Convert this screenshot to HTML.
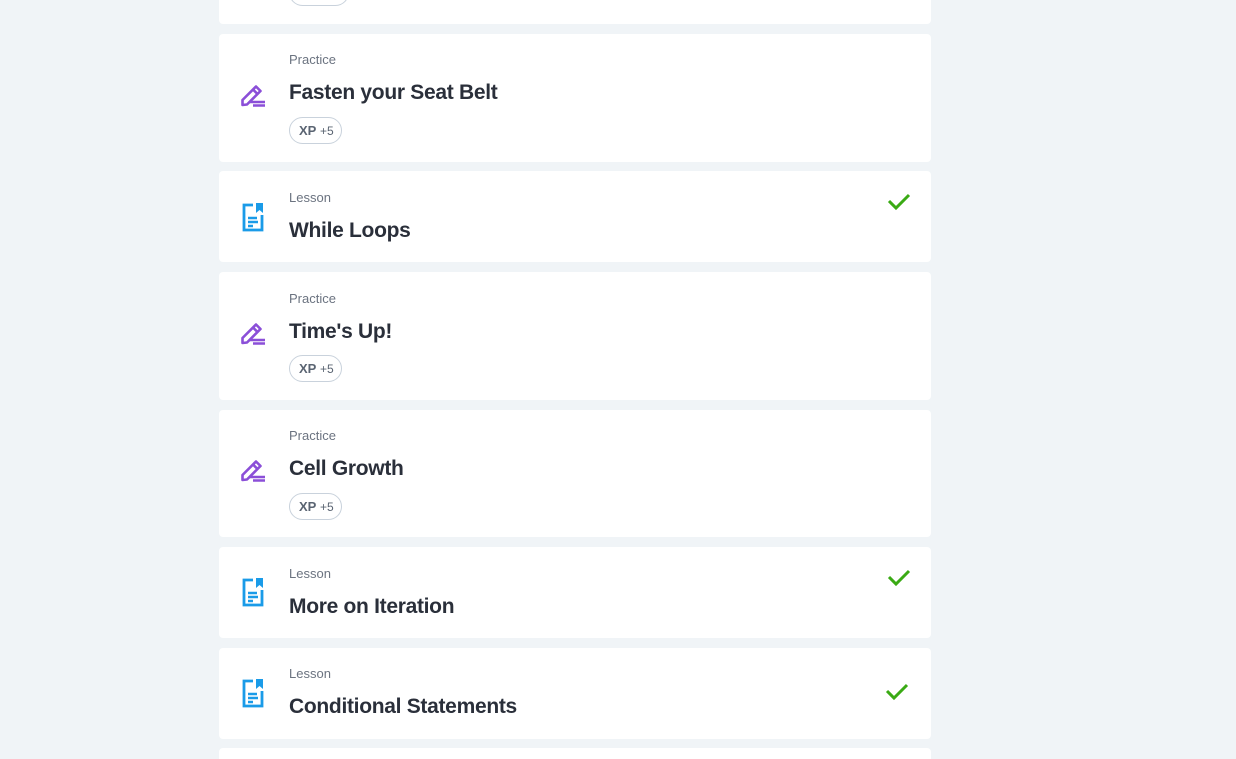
<!DOCTYPE html>
<html style="overflow:hidden;height:759px"><head><meta charset="utf-8"><style>
body{margin:0;width:1236px;height:759px;background:#f0f4f7;position:relative;overflow:hidden;font-family:"Liberation Sans",sans-serif}
.c{position:absolute;left:219px;width:712px;background:#fff;border-radius:4px}
.l{position:absolute;left:70px;font-size:13px;color:#6b7380}
.t{position:absolute;left:70px;font-size:21px;font-weight:bold;color:#2a2f3a;letter-spacing:-0.3px}
.b{position:absolute;left:70px;width:53px;height:27px;border:1px solid #c9d2dc;border-radius:14px;box-sizing:border-box;font-size:13px;color:#5a6472;line-height:25px;text-indent:9px}
.b b{color:#5a6472}
.i{position:absolute;left:21px}
.k{position:absolute;left:668px}
</style></head><body>
<svg width="0" height="0" style="position:absolute"><defs>
<g id="pen"><path d="M2.5 21 L2.5 16 L16 2.5 L20.5 7 L7 20.5 Z M13 5.5 L17.5 10" fill="none" stroke="#8b4fd8" stroke-width="2.6" stroke-linejoin="round"/><path d="M10 18 H25 M13 21.5 H25" stroke="#8b4fd8" stroke-width="2.4"/></g>
<g id="doc"><path d="M11 2 H2 V27 H20 V12" fill="none" stroke="#1a9be8" stroke-width="2.8"/><path d="M14 0 H21 V10 L17.5 7 L14 10 Z" fill="#1a9be8"/><path d="M6 15 H15 M6 19 H16 M6 23 H11" stroke="#1a9be8" stroke-width="2.4"/></g>
<g id="chk"><path d="M2 11 L9 18 L22 5" fill="none" stroke="#3aaa14" stroke-width="3"/></g>
</defs></svg>

<div class="c" style="top:-20px;height:44px"><div class="b" style="top:-1px;width:60px"></div></div>

<div class="c" style="top:34px;height:128px">
<svg class="i" style="top:50px" width="26" height="24"><use href="#pen"/></svg>
<div class="l" style="top:18px">Practice</div><div class="t" style="top:47px">Fasten your Seat Belt</div>
<div class="b" style="top:83px"><b>XP</b> <span style="font-size:12px">+5</span></div></div>

<div class="c" style="top:171px;height:91px">
<svg class="i" style="top:32px;left:23px" width="23" height="29"><use href="#doc"/></svg>
<div class="l" style="top:19px">Lesson</div><div class="t" style="top:48px">While Loops</div>
<svg class="k" style="top:19px" width="25" height="22"><use href="#chk"/></svg></div>

<div class="c" style="top:272px;height:128px">
<svg class="i" style="top:50px" width="26" height="24"><use href="#pen"/></svg>
<div class="l" style="top:19px">Practice</div><div class="t" style="top:48px">Time's Up!</div>
<div class="b" style="top:83px"><b>XP</b> <span style="font-size:12px">+5</span></div></div>

<div class="c" style="top:410px;height:127px">
<svg class="i" style="top:49px" width="26" height="24"><use href="#pen"/></svg>
<div class="l" style="top:18px">Practice</div><div class="t" style="top:47px">Cell Growth</div>
<div class="b" style="top:83px"><b>XP</b> <span style="font-size:12px">+5</span></div></div>

<div class="c" style="top:547px;height:91px">
<svg class="i" style="top:31px;left:23px" width="23" height="29"><use href="#doc"/></svg>
<div class="l" style="top:19px">Lesson</div><div class="t" style="top:48px">More on Iteration</div>
<svg class="k" style="top:19px" width="25" height="22"><use href="#chk"/></svg></div>

<div class="c" style="top:648px;height:91px">
<svg class="i" style="top:31px;left:23px" width="23" height="29"><use href="#doc"/></svg>
<div class="l" style="top:18px">Lesson</div><div class="t" style="top:47px">Conditional Statements</div>
<svg class="k" style="top:32px;left:666px" width="25" height="22"><use href="#chk"/></svg></div>

<div class="c" style="top:748px;height:11px;border-radius:4px 4px 0 0"></div>
</body></html>
